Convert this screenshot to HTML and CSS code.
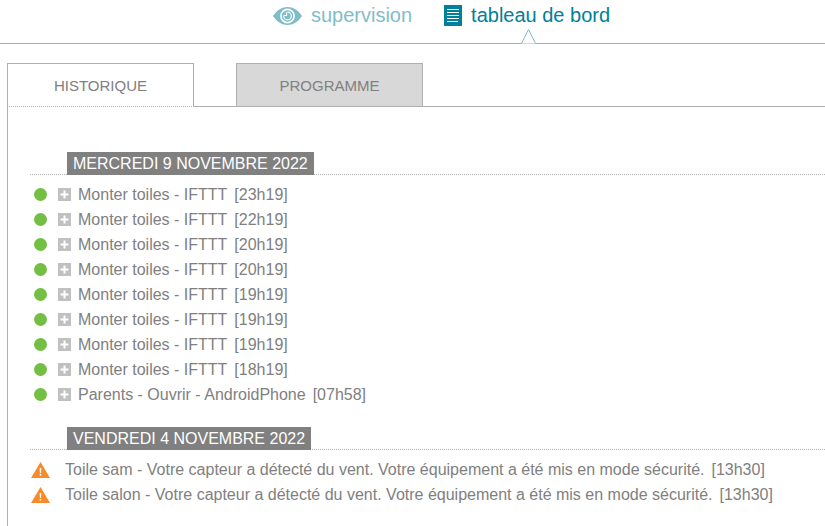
FILE: index.html
```html
<!DOCTYPE html>
<html lang="fr">
<head>
  <meta charset="UTF-8" />
  <meta name="viewport" content="width=device-width, initial-scale=1.0"/>
  <title>Tableau de bord</title>
  <link rel="stylesheet" href="styles.css">
</head>
<body>
  <!-- Shared icons -->
  <svg class="sprite" aria-hidden="true">
    <symbol id="plus" viewBox="0 0 13 13">
      <rect width="13" height="13" fill="#c0c0c0"/>
      <path d="M6.5 2.500v8M2.500 6.500h8" stroke="#fff" stroke-width="2"/>
    </symbol>
    <symbol id="warning" viewBox="0 0 19 16">
      <path d="M9.500 0L19 16H0z" fill="#f68b28"/>
      <path d="M8.700 6h1.600l-.2 5H8.900z" fill="#fff"/>
      <rect x="8.700" y="12" width="1.600" height="1.600" fill="#fff"/>
    </symbol>
  </svg>

  <header>
    <nav class="main-nav">
      <a href="#supervision" class="nav-link">
        <svg width="29" height="18" viewBox="0 0 29 18" aria-hidden="true">
          <path d="M0 9C4 3 9 0 14.5 0S25 3 29 9c-4 6-9 9-14.5 9S4 15 0 9z" fill="#7fbdca"/>
          <circle cx="14.5" cy="9" r="6.600" fill="none" stroke="#fff" stroke-width="1.600"/>
          <path d="M13.500 5v3.500h-3" fill="none" stroke="#fff" stroke-width="1.200"/>
          <path d="M14.500 5.200a3.800 3.800 0 1 1-3.800 3.800" fill="none" stroke="#fff" stroke-width="1.200"/>
        </svg>
        supervision
      </a>
      <a href="#tableau" class="nav-link current">
        <svg width="18" height="21" viewBox="0 0 18 21" aria-hidden="true">
          <rect width="18" height="21" fill="#00809a"/>
          <path d="M3 4.5h12M3 7.5h12M3 10.5h12M3 13.5h12M3 16.5h11" stroke="#fff"/>
        </svg>
        tableau de bord
        <svg class="pointer" width="15" height="15" viewBox="0 0 15 15" aria-hidden="true">
          <path d="M.5 14.5L7.5 .5l7 14z" fill="#fff"/>
          <path d="M.5 14.5L7.5 .5l7 14" fill="none" stroke="#7fbdca"/>
        </svg>
      </a>
    </nav>
  </header>

  <main>
    <div class="tabs">
      <button type="button" class="tab active">HISTORIQUE</button>
      <button type="button" class="tab">PROGRAMME</button>
    </div>

    <div class="panel">
      <section>
        <h2><span>MERCREDI 9 NOVEMBRE 2022</span></h2>
        <ul>
          <li><i class="dot"></i><svg class="plus"><use href="#plus"/></svg>Monter toiles - IFTTT <time>[23h19]</time></li>
          <li><i class="dot"></i><svg class="plus"><use href="#plus"/></svg>Monter toiles - IFTTT <time>[22h19]</time></li>
          <li><i class="dot"></i><svg class="plus"><use href="#plus"/></svg>Monter toiles - IFTTT <time>[20h19]</time></li>
          <li><i class="dot"></i><svg class="plus"><use href="#plus"/></svg>Monter toiles - IFTTT <time>[20h19]</time></li>
          <li><i class="dot"></i><svg class="plus"><use href="#plus"/></svg>Monter toiles - IFTTT <time>[19h19]</time></li>
          <li><i class="dot"></i><svg class="plus"><use href="#plus"/></svg>Monter toiles - IFTTT <time>[19h19]</time></li>
          <li><i class="dot"></i><svg class="plus"><use href="#plus"/></svg>Monter toiles - IFTTT <time>[19h19]</time></li>
          <li><i class="dot"></i><svg class="plus"><use href="#plus"/></svg>Monter toiles - IFTTT <time>[18h19]</time></li>
          <li><i class="dot"></i><svg class="plus"><use href="#plus"/></svg>Parents - Ouvrir - AndroidPhone <time>[07h58]</time></li>
        </ul>
      </section>

      <section>
        <h2><span>VENDREDI 4 NOVEMBRE 2022</span></h2>
        <ul>
          <li><svg class="warning"><use href="#warning"/></svg>Toile sam - Votre capteur a détecté du vent. Votre équipement a été mis en mode sécurité. <time>[13h30]</time></li>
          <li><svg class="warning"><use href="#warning"/></svg>Toile salon - Votre capteur a détecté du vent. Votre équipement a été mis en mode sécurité. <time>[13h30]</time></li>
        </ul>
      </section>
    </div>
  </main>
</body>
</html>
```

FILE: styles.css
```css
:root {
  --teal: #00809a;
  --teal-light: #7fbdca;
  --grey: #808080;
  --line: #b0b0b0;
}

* {
  box-sizing: border-box;
}

body {
  display: flex;
  flex-direction: column;
  min-height: 100vh;
  margin: 0;
  background-color: #fff;
  color: var(--grey);
  font-family: "Liberation Sans", Arial, sans-serif;
  font-size: 16px;
}

.sprite {
  display: none;
}

header {
  border-bottom: 1px solid var(--teal-light);
}

.main-nav {
  display: flex;
  justify-content: center;
  gap: 32px;
  padding: 0 0 12px 58px;
}

.nav-link {
  position: relative;
  display: flex;
  align-items: center;
  gap: 9px;
  height: 31px;
  color: var(--teal-light);
  font-size: 20px;
  text-decoration: none;
}

.nav-link.current {
  color: var(--teal);
}

.pointer {
  position: absolute;
  left: 50%;
  bottom: -13px;
  margin-left: -6px;
}

main {
  display: flex;
  flex: 1;
  flex-direction: column;
  padding: 19px 0 0 7px;
}

.tabs {
  display: flex;
  gap: 42px;
  border-bottom: 1px solid var(--line);
}

.tab {
  width: 187px;
  height: 44px;
  margin: 0 0 -1px;
  padding: 0;
  border: 1px solid var(--line);
  background-color: #d8d8d8;
  color: var(--grey);
  font-family: inherit;
  font-size: 15px;
  cursor: pointer;
}

.tab.active {
  border-bottom-style: dotted;
  background-color: #fff;
}

.panel {
  flex: 1;
  padding: 45px 0 16px 22px;
  border-left: 1px solid var(--line);
}

section {
  margin-bottom: 20px;
}

section:last-child {
  margin-bottom: 0;
}

h2 {
  display: flex;
  margin: 0 0 7px;
  padding-left: 37px;
  border-bottom: 1px dotted var(--line);
  font-size: 16px;
  font-weight: normal;
}

h2 span {
  margin-bottom: -1px;
  padding: 0 6px;
  background-color: var(--grey);
  color: #fff;
  line-height: 23px;
}

ul {
  margin: 0;
  padding: 0;
  list-style: none;
}

li {
  display: flex;
  align-items: center;
  line-height: 25px;
}

time {
  margin-left: 7px;
}

.dot {
  width: 13px;
  height: 13px;
  margin: 0 11px 0 4px;
  border-radius: 50%;
  background-color: #72bf44;
}

.plus {
  width: 13px;
  height: 13px;
  margin-right: 7px;
}

.warning {
  width: 19px;
  height: 16px;
  margin: 0 15px 0 1px;
}
```
